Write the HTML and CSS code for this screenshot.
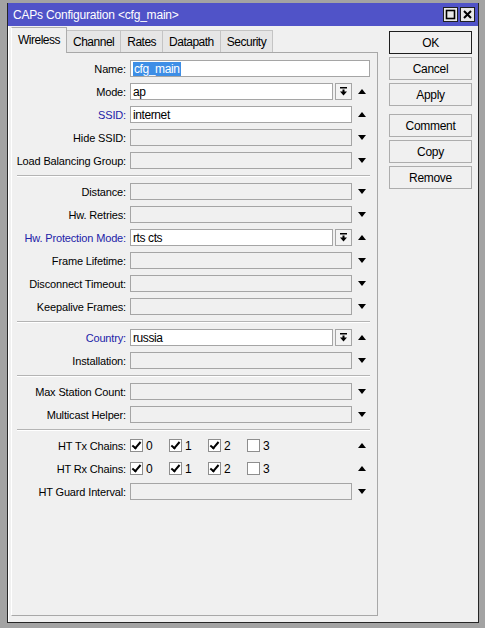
FILE: index.html
```html
<!DOCTYPE html>
<html lang="en">
<head>
    <meta charset="UTF-8">
    <title>CAPs Configuration</title>
    <link rel="stylesheet" href="styles.css">
</head>
<body>
    <div class="window">
        <div class="titlebar">
            <span class="title">CAPs Configuration &lt;cfg_main&gt;</span>
            <div class="win-btns">
                <span class="win-btn">
                    <svg width="11" height="11" viewBox="0 0 11 11"><rect x="1.5" y="1.5" width="8" height="8" fill="none" stroke="#000" stroke-width="1.6"/></svg>
                </span>
                <span class="win-btn">
                    <svg width="11" height="11" viewBox="0 0 11 11"><path d="M2 2 L9 9 M9 2 L2 9" stroke="#000" stroke-width="2"/></svg>
                </span>
            </div>
        </div>

        <div class="content">
            <div class="main">
                <div class="tabs">
                    <div class="tab active">Wireless</div>
                    <div class="tab">Channel</div>
                    <div class="tab">Rates</div>
                    <div class="tab">Datapath</div>
                    <div class="tab">Security</div>
                </div>

                <div class="panel">
                    <div class="row">
                        <span class="lbl">Name:</span>
                        <div class="field wide on"><span class="sel">cfg_main</span></div>
                    </div>
                    <div class="row">
                        <span class="lbl">Mode:</span>
                        <div class="combo">
                            <div class="field on">ap</div>
                            <span class="drop"><svg width="9" height="9" viewBox="0 0 9 9"><rect x="1" y="0" width="7" height="1.5" fill="#000"/><path d="M3.5 2.5 H5.5 V4.5 H8 L4.5 8.5 L1 4.5 H3.5 Z" fill="#000"/></svg></span>
                        </div>
                        <span class="arr"><i class="up"></i></span>
                    </div>
                    <div class="row">
                        <span class="lbl blue">SSID:</span>
                        <div class="field on">internet</div>
                        <span class="arr"><i class="up"></i></span>
                    </div>
                    <div class="row">
                        <span class="lbl">Hide SSID:</span>
                        <div class="field"></div>
                        <span class="arr"><i class="down"></i></span>
                    </div>
                    <div class="row">
                        <span class="lbl">Load Balancing Group:</span>
                        <div class="field"></div>
                        <span class="arr"><i class="down"></i></span>
                    </div>

                    <div class="sep"></div>

                    <div class="row">
                        <span class="lbl">Distance:</span>
                        <div class="field"></div>
                        <span class="arr"><i class="down"></i></span>
                    </div>
                    <div class="row">
                        <span class="lbl">Hw. Retries:</span>
                        <div class="field"></div>
                        <span class="arr"><i class="down"></i></span>
                    </div>
                    <div class="row">
                        <span class="lbl blue">Hw. Protection Mode:</span>
                        <div class="combo">
                            <div class="field on">rts cts</div>
                            <span class="drop"><svg width="9" height="9" viewBox="0 0 9 9"><rect x="1" y="0" width="7" height="1.5" fill="#000"/><path d="M3.5 2.5 H5.5 V4.5 H8 L4.5 8.5 L1 4.5 H3.5 Z" fill="#000"/></svg></span>
                        </div>
                        <span class="arr"><i class="up"></i></span>
                    </div>
                    <div class="row">
                        <span class="lbl">Frame Lifetime:</span>
                        <div class="field"></div>
                        <span class="arr"><i class="down"></i></span>
                    </div>
                    <div class="row">
                        <span class="lbl">Disconnect Timeout:</span>
                        <div class="field"></div>
                        <span class="arr"><i class="down"></i></span>
                    </div>
                    <div class="row">
                        <span class="lbl">Keepalive Frames:</span>
                        <div class="field"></div>
                        <span class="arr"><i class="down"></i></span>
                    </div>

                    <div class="sep"></div>

                    <div class="row">
                        <span class="lbl blue">Country:</span>
                        <div class="combo">
                            <div class="field on">russia</div>
                            <span class="drop"><svg width="9" height="9" viewBox="0 0 9 9"><rect x="1" y="0" width="7" height="1.5" fill="#000"/><path d="M3.5 2.5 H5.5 V4.5 H8 L4.5 8.5 L1 4.5 H3.5 Z" fill="#000"/></svg></span>
                        </div>
                        <span class="arr"><i class="up"></i></span>
                    </div>
                    <div class="row">
                        <span class="lbl">Installation:</span>
                        <div class="field"></div>
                        <span class="arr"><i class="down"></i></span>
                    </div>

                    <div class="sep"></div>

                    <div class="row">
                        <span class="lbl">Max Station Count:</span>
                        <div class="field"></div>
                        <span class="arr"><i class="down"></i></span>
                    </div>
                    <div class="row">
                        <span class="lbl">Multicast Helper:</span>
                        <div class="field"></div>
                        <span class="arr"><i class="down"></i></span>
                    </div>

                    <div class="sep"></div>

                    <div class="row">
                        <span class="lbl">HT Tx Chains:</span>
                        <div class="checks">
                            <span class="chk"><span class="box checked"></span>0</span>
                            <span class="chk"><span class="box checked"></span>1</span>
                            <span class="chk"><span class="box checked"></span>2</span>
                            <span class="chk"><span class="box"></span>3</span>
                        </div>
                        <span class="arr"><i class="up"></i></span>
                    </div>
                    <div class="row">
                        <span class="lbl">HT Rx Chains:</span>
                        <div class="checks">
                            <span class="chk"><span class="box checked"></span>0</span>
                            <span class="chk"><span class="box checked"></span>1</span>
                            <span class="chk"><span class="box checked"></span>2</span>
                            <span class="chk"><span class="box"></span>3</span>
                        </div>
                        <span class="arr"><i class="up"></i></span>
                    </div>
                    <div class="row">
                        <span class="lbl">HT Guard Interval:</span>
                        <div class="field"></div>
                        <span class="arr"><i class="down"></i></span>
                    </div>
                </div>
            </div>

            <div class="actions">
                <button class="btn default">OK</button>
                <button class="btn">Cancel</button>
                <button class="btn">Apply</button>
                <button class="btn group">Comment</button>
                <button class="btn">Copy</button>
                <button class="btn">Remove</button>
            </div>
        </div>
    </div>
</body>
</html>
```

FILE: styles.css
```css
body {
    margin: 0;
    background: #a3a3a3;
    font-family: "Liberation Sans", Arial, sans-serif;
    font-size: 11px;
    color: #000;
}
.window {
    margin: 3px 0 0 7px;
    width: 472px;
    height: 620px;
    box-sizing: border-box;
    border: 1px solid #262626;
    border-top: none;
    background: #f0f0f0;
    display: flex;
    flex-direction: column;
}
.titlebar {
    height: 23px;
    background: #5053c8;
    color: #fff;
    font-size: 12px;
    letter-spacing: -0.2px;
    display: flex;
    align-items: center;
    justify-content: space-between;
    padding: 0 3px 0 5px;
}
.win-btns {
    display: flex;
    gap: 2px;
}
.win-btn {
    width: 13px;
    height: 13px;
    background: #e8e8e8;
    border: 1px solid #202020;
    display: flex;
    align-items: center;
    justify-content: center;
}
.content {
    flex: 1;
    display: flex;
    padding: 0 0 6px 2px;
    border-left: 1px solid #fff;
}
.main {
    width: 367px;
    display: flex;
    flex-direction: column;
}
.tabs {
    height: 26px;
    display: flex;
    align-items: flex-end;
}
.tab {
    height: 22px;
    box-sizing: border-box;
    padding: 0 6px;
    border: 1px solid #c4c4c4;
    border-bottom: none;
    border-left: none;
    background: #e6e6e6;
    display: flex;
    align-items: center;
    font-size: 12px;
    letter-spacing: -0.5px;
}
.tab.active {
    height: 26px;
    margin-bottom: -1px;
    padding: 0 6px 2px 6px;
    background: #f0f0f0;
    border-color: #adadad;
    border-left: 1px solid #fff;
    position: relative;
}
.panel {
    flex: 1;
    border: 1px solid #a8a8a8;
    border-left-color: #fff;
    padding-top: 7px;
}
.row {
    display: flex;
    align-items: center;
    height: 17px;
    margin-bottom: 6px;
}
.lbl {
    width: 114px;
    margin-right: 4px;
    text-align: right;
    white-space: nowrap;
    font-size: 11px;
    letter-spacing: -0.15px;
}
.lbl.blue {
    color: #2222a8;
}
.field {
    width: 222px;
    height: 17px;
    box-sizing: border-box;
    border: 1px solid #a5a5a5;
    padding-left: 2px;
    display: flex;
    align-items: center;
    font-size: 12px;
    letter-spacing: -0.4px;
}
.field.on {
    background: #fff;
}
.field.wide {
    width: 240px;
}
.sel {
    background: #3d8ee6;
    color: #fff;
    padding: 0 1px;
    line-height: 14px;
}
.combo {
    width: 222px;
    display: flex;
}
.combo .field {
    width: 203px;
    margin-right: 2px;
}
.drop {
    width: 17px;
    height: 17px;
    box-sizing: border-box;
    border: 1px solid #a5a5a5;
    background: #f3f3f3;
    display: flex;
    align-items: center;
    justify-content: center;
}
.arr {
    width: 20px;
    display: flex;
    justify-content: center;
}
.arr i {
    width: 0;
    height: 0;
    border-left: 4.5px solid transparent;
    border-right: 4.5px solid transparent;
}
.arr .up {
    border-bottom: 5px solid #000;
}
.arr .down {
    border-top: 5px solid #000;
}
.sep {
    height: 0;
    margin: 0 7px 6px 5px;
    border-top: 1px solid #b4b4b4;
    border-bottom: 1px solid #fff;
}
.checks {
    width: 222px;
    display: flex;
}
.chk {
    width: 39px;
    display: flex;
    align-items: center;
    font-size: 12px;
}
.box {
    width: 13px;
    height: 13px;
    box-sizing: border-box;
    border: 1px solid #8e8e8e;
    background: #fff;
    margin-right: 3px;
    position: relative;
}
.box.checked::after {
    content: "";
    position: absolute;
    left: 3px;
    top: 0px;
    width: 3px;
    height: 7px;
    border-right: 2px solid #000;
    border-bottom: 2px solid #000;
    transform: rotate(40deg);
}
.actions {
    margin-left: 11px;
    width: 83px;
    padding-top: 5px;
    display: flex;
    flex-direction: column;
}
.btn {
    height: 23px;
    margin-bottom: 3px;
    border: 1px solid #adadad;
    background: #f0f0f0;
    font-family: "Liberation Sans", Arial, sans-serif;
    font-size: 12px;
    letter-spacing: -0.3px;
    color: #000;
    padding: 0;
}
.btn.default {
    border-color: #1e1e1e;
}
.btn.group {
    margin-top: 5px;
}
```
